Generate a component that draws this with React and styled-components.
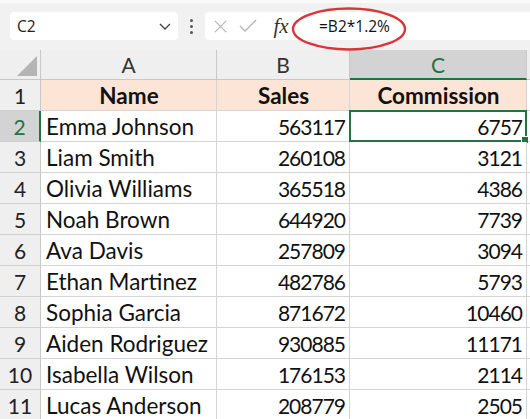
import React from 'react';
import styled, { createGlobalStyle } from 'styled-components';

const GlobalStyle = createGlobalStyle`
    html, body {
        margin: 0;
        padding: 0;
        background: #ffffff;
        overflow: hidden;
    }
    body {
        font-family: 'Lato', 'Liberation Sans', sans-serif;
    }
`;

const rows = [
    { name: 'Emma Johnson', sales: 563117, commission: 6757 },
    { name: 'Liam Smith', sales: 260108, commission: 3121 },
    { name: 'Olivia Williams', sales: 365518, commission: 4386 },
    { name: 'Noah Brown', sales: 644920, commission: 7739 },
    { name: 'Ava Davis', sales: 257809, commission: 3094 },
    { name: 'Ethan Martinez', sales: 482786, commission: 5793 },
    { name: 'Sophia Garcia', sales: 871672, commission: 10460 },
    { name: 'Aiden Rodriguez', sales: 930885, commission: 11171 },
    { name: 'Isabella Wilson', sales: 176153, commission: 2114 },
    { name: 'Lucas Anderson', sales: 208779, commission: 2505 },
];

const green = '#217346';

const Page = styled.div`
    width: 530px;
    height: 419px;
    overflow: hidden;
    background: #ffffff;
`;

const Toolbar = styled.div`
    position: relative;
    height: 50px;
    box-sizing: border-box;
    padding: 12px 0 0 10px;
    background: #f1f1f1;
    border-top: 3px solid #fafafa;
    display: flex;
    align-items: flex-start;
`;

const NameBox = styled.div`
    width: 168px;
    height: 28px;
    box-sizing: border-box;
    margin-top: -3px;
    background: #ffffff;
    border-radius: 4px;
    display: flex;
    align-items: center;
    justify-content: space-between;
    padding: 0 6px 0 7px;
    font-family: 'Open Sans', 'Liberation Sans', sans-serif;
    font-size: 15.5px;
    color: #222;
`;

const Dots = styled.div`
    width: 27px;
    height: 28px;
    margin-top: -3px;
    display: flex;
    flex-direction: column;
    align-items: center;
    justify-content: center;
    gap: 3px;

    span {
        width: 3px;
        height: 3px;
        border-radius: 50%;
        background: #555;
    }
`;

const FormulaBox = styled.div`
    flex: 1;
    height: 28px;
    margin-top: -3px;
    background: #ffffff;
    border-radius: 4px 0 0 4px;
    display: flex;
    align-items: center;
`;

const IconSlot = styled.div`
    flex: none;
    width: ${({ w }) => w}px;
    display: flex;
    align-items: center;
    justify-content: center;
`;

const Fx = styled.span`
    flex: none;
    font-family: 'Liberation Serif', 'DejaVu Serif', serif;
    font-style: italic;
    font-size: 21px;
    color: #333;
    width: 40px;
    text-align: center;
`;

const FormulaText = styled.span`
    margin-left: 18px;
    font-family: 'Open Sans', 'Liberation Sans', sans-serif;
    font-size: 15.5px;
    color: #111;
`;

const Ellipse = styled.svg`
    position: absolute;
    left: 290px;
    top: 2px;
`;

const Sheet = styled.div`
    display: grid;
    grid-template-columns: 41px 176px 133px 177px 3px;
    grid-auto-rows: 31px;
    grid-template-rows: 30px;
`;

const Corner = styled.div`
    background: #efefef;
    border-right: 1px solid #c8c8c8;
    border-bottom: 1px solid #c8c8c8;
    box-sizing: border-box;
    position: relative;

    &::after {
        content: '';
        position: absolute;
        right: 3px;
        bottom: 3px;
        width: 0;
        height: 0;
        border-left: 20px solid transparent;
        border-bottom: 20px solid #b4b4b4;
    }
`;

const ColHead = styled.div`
    box-sizing: border-box;
    background: ${({ active }) => (active ? '#d3d3d3' : '#efefef')};
    color: ${({ active }) => (active ? green : '#333')};
    border-right: 1px solid #c8c8c8;
    border-bottom: ${({ active }) => (active ? `2px solid ${green}` : '1px solid #c8c8c8')};
    display: flex;
    align-items: center;
    justify-content: center;
    font-size: 21px;
`;

const RowHead = styled.div`
    box-sizing: border-box;
    background: ${({ active }) => (active ? '#d3d3d3' : '#efefef')};
    color: ${({ active }) => (active ? green : '#222')};
    border-right: ${({ active }) => (active ? `2px solid ${green}` : '1px solid #c8c8c8')};
    border-bottom: 1px solid #d0d0d0;
    display: flex;
    align-items: center;
    justify-content: center;
    font-size: 21px;
`;

const Cell = styled.div`
    box-sizing: border-box;
    position: relative;
    background: ${({ header }) => (header ? '#fce4d6' : '#ffffff')};
    border-right: 1px solid #d4d4d4;
    border-bottom: 1px solid #d4d4d4;
    display: flex;
    align-items: center;
    justify-content: ${({ align }) => align || 'flex-start'};
    padding: 0 4px 0 5px;
    font-size: ${({ numeric }) => (numeric ? '21px' : '22.5px')};
    letter-spacing: ${({ numeric }) => (numeric ? '-1px' : 'normal')};
    font-weight: ${({ header }) => (header ? 700 : 400)};
    color: #111;
    white-space: nowrap;
`;

const Selection = styled.div`
    position: absolute;
    left: -1px;
    top: -1px;
    right: -1px;
    bottom: -1px;
    border: 2px solid ${green};
    pointer-events: none;

    &::after {
        content: '';
        position: absolute;
        right: -4px;
        bottom: -4px;
        width: 6px;
        height: 6px;
        background: ${green};
        border: 1px solid #fff;
    }
`;

const Edge = styled.div`
    background: ${({ head }) => (head ? '#efefef' : '#ffffff')};
    border-bottom: 1px solid ${({ head }) => (head ? '#c8c8c8' : '#d4d4d4')};
    box-sizing: border-box;
`;

const App = () => {
    return (
        <Page>
            <GlobalStyle />
            <Toolbar>
                <NameBox>
                    C2
                    <svg width="14" height="14" viewBox="0 0 14 14">
                        <path d="M2 5 L7 10 L12 5" fill="none" stroke="#444" strokeWidth="1.4" />
                    </svg>
                </NameBox>
                <Dots>
                    <span />
                    <span />
                    <span />
                </Dots>
                <FormulaBox>
                    <IconSlot w={30}>
                        <svg width="15" height="15" viewBox="0 0 16 16">
                            <path d="M2 2 L14 14 M14 2 L2 14" stroke="#b5b5b5" strokeWidth="1.3" />
                        </svg>
                    </IconSlot>
                    <IconSlot w={26}>
                        <svg width="18" height="16" viewBox="0 0 18 16">
                            <path d="M1 8 L6 13 L17 2" fill="none" stroke="#b5b5b5" strokeWidth="1.3" />
                        </svg>
                    </IconSlot>
                    <Fx>fx</Fx>
                    <FormulaText>=B2*1.2%</FormulaText>
                </FormulaBox>
                <Ellipse width="120" height="48" viewBox="0 0 120 48">
                    <ellipse cx="59" cy="24" rx="56" ry="20.5" fill="none" stroke="#d8353a" strokeWidth="2.4" />
                </Ellipse>
            </Toolbar>

            <Sheet>
                <Corner />
                <ColHead>A</ColHead>
                <ColHead>B</ColHead>
                <ColHead active>C</ColHead>
                <Edge head />

                <RowHead>1</RowHead>
                <Cell header align="center">Name</Cell>
                <Cell header align="center">Sales</Cell>
                <Cell header align="center">Commission</Cell>
                <Edge />

                {rows.map((r, i) => (
                    <React.Fragment key={r.name}>
                        <RowHead active={i === 0}>{i + 2}</RowHead>
                        <Cell>{r.name}</Cell>
                        <Cell numeric align="flex-end">{r.sales}</Cell>
                        <Cell numeric align="flex-end">
                            {r.commission}
                            {i === 0 && <Selection />}
                        </Cell>
                        <Edge />
                    </React.Fragment>
                ))}
            </Sheet>
        </Page>
    );
};

export default App;
